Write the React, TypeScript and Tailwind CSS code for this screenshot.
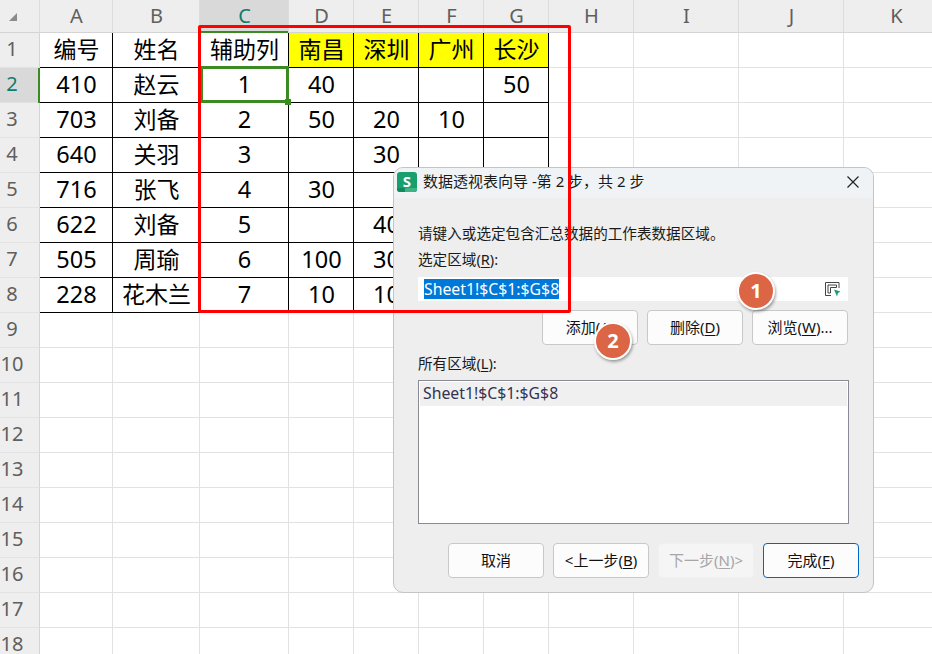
import React from "react";

const cols = ["A", "B", "C", "D", "E", "F", "G", "H", "I", "J", "K"];
const data: string[][] = [
  ["编号", "姓名", "辅助列", "南昌", "深圳", "广州", "长沙"],
  ["410", "赵云", "1", "40", "", "", "50"],
  ["703", "刘备", "2", "50", "20", "10", ""],
  ["640", "关羽", "3", "", "30", "", ""],
  ["716", "张飞", "4", "30", "", "", ""],
  ["622", "刘备", "5", "", "40", "", ""],
  ["505", "周瑜", "6", "100", "30", "", ""],
  ["228", "花木兰", "7", "10", "10", "", ""],
];
const rows = Array.from({ length: 18 }, (_, i) => i + 1);
const fontCls = "font-['Noto_Sans','Noto_Sans_CJK_SC',sans-serif]";

function Btn({ label, mnemonic, suffix = "", prefix = "", kind = "normal" }: { label: string; mnemonic?: string; suffix?: string; prefix?: string; kind?: "normal" | "disabled" | "primary" }) {
  const cls =
    kind === "disabled"
      ? "border-[#f0f0f0] bg-[#f5f5f5] text-[#a6a6a6]"
      : kind === "primary"
      ? "border-[#0067c0] bg-[#fcfcfc] text-[#111]"
      : "border-[#c8c8c8] bg-[#fcfcfc] text-[#111]";
  return (
    <div className={`flex h-[35px] w-[96px] shrink-0 items-center justify-center rounded-[4px] border pb-[1px] text-[15px] ${cls}`}>
      <span>
        {prefix}
        {label}
        {mnemonic && (
          <>
            (<span className="underline underline-offset-2">{mnemonic}</span>)
          </>
        )}
        {suffix}
      </span>
    </div>
  );
}

function Badge({ n, cls }: { n: string; cls: string }) {
  return (
    <div className={`absolute flex h-[38px] w-[38px] items-center justify-center rounded-full border-[2px] border-white bg-[#dc6546] text-[20px] font-bold text-white shadow-[1px_2px_3px_rgba(0,0,0,0.35)] ${cls}`}>
      {n}
    </div>
  );
}

export default function App() {
  return (
    <div className={`relative h-[654px] w-[932px] overflow-hidden bg-white ${fontCls}`}>
      <div className="grid grid-cols-[40px_73px_87px_89px_65px_65px_65px_65px_85px_105px_105px_105px] grid-rows-[33px_repeat(18,35px)]">
        {/* corner */}
        <div className="flex items-end justify-start border-r border-b border-r-[#dcdcdc] border-b-[#d4d4d4] bg-[#eeeeee] pb-[10px] pl-[8px]">
          <svg width="10" height="10" viewBox="0 0 10 10" className="shrink-0">
            <path d="M9 1V9H1Z" fill="#8a8a8a" />
          </svg>
        </div>
        {cols.map((c) => (
          <div
            key={c}
            className={`flex items-center justify-center border-r border-b border-r-[#dcdcdc] border-b-[#d4d4d4] pb-[1px] pl-[1px] text-[20px] ${c === "C" ? "bg-[#d9d9d9] text-[#0f7b6c]" : "bg-[#eeeeee] text-[#5f5f5f]"}`}
          >
            {c}
          </div>
        ))}
        {rows.map((r) => (
          <React.Fragment key={r}>
            <div
              className={`relative flex items-center justify-center border-r border-b border-r-[#d4d4d4] border-b-[#e2e2e2] pr-[15px] pb-[2px] text-[20px] ${r === 2 ? "bg-[#d9d9d9] text-[#0f7b6c]" : "bg-[#eeeeee] text-[#5f5f5f]"}`}
            >
              {r}
              {r === 2 && <div className="absolute top-0 -right-px -bottom-px w-[2px] bg-[#3c8a22]" />}
            </div>
            {cols.map((_, ci) => {
              const v = data[r - 1]?.[ci];
              const inTable = r <= 8 && ci <= 6;
              const yellow = r === 1 && ci >= 3 && ci <= 6;
              const cjk = !!v && /[^0-9]/.test(v);
              return (
                <div
                  key={ci}
                  className={`relative flex items-center justify-center border-r border-b pb-[1px] pl-[1px] leading-none whitespace-nowrap text-black ${cjk ? "text-[23px]" : "text-[23.5px]"} ${inTable ? "border-black" : "border-[#e2e2e2]"} ${yellow ? "bg-[#ffff00]" : ""}`}
                >
                  {v}
                  {r === 1 && ci === 2 && <div className="absolute -top-[2px] right-0 left-0 h-[2px] bg-[#3c8a22]" />}
                  {r === 2 && ci === 2 && (
                    <>
                      <div className="absolute -top-[2px] -right-px -bottom-px left-0 z-10 border-[3px] border-[#3c8a22]" />
                      <div className="absolute -right-[3px] -bottom-[3px] z-10 h-[6px] w-[6px] bg-[#3c8a22]" />
                    </>
                  )}
                </div>
              );
            })}
          </React.Fragment>
        ))}
      </div>

      {/* dialog window */}
      <div className="absolute top-[167px] left-[393px] z-20 flex h-[426px] w-[481px] flex-col overflow-hidden rounded-[10px] border border-[#c4c4c4] bg-[#eeeeee] text-[14.6px] text-[#1a1a1a]">
        <div className="flex h-[30px] shrink-0 items-center bg-[#eff3f6] pr-[14px] pb-[2px] pl-[3px]">
          <svg width="20" height="20" viewBox="0 0 20 20" className="shrink-0">
            <rect width="20" height="20" rx="3" fill="#17a06d" />
            <path d="M0 16H20V17a3 3 0 0 1-3 3H3a3 3 0 0 1-3-3Z" fill="#118a5c" />
            <path d="M8 16H20V17a3 3 0 0 1-3 3H8Z" fill="#3cb487" />
            <text x="10" y="14.5" textAnchor="middle" fontSize="15" fontWeight="700" fill="#fff" fontFamily="Noto Sans">S</text>
          </svg>
          <span className="ml-[6px] -translate-y-[1px] text-[15px] whitespace-nowrap">数据透视表向导 -第 2 步，共 2 步</span>
          <svg width="12" height="12" viewBox="0 0 12 12" className="ml-auto shrink-0">
            <path d="M0.5 0.5L11.5 11.5M11.5 0.5L0.5 11.5" stroke="#222" strokeWidth="1.2" />
          </svg>
        </div>

        <div className="flex flex-1 flex-col pr-[25px] pl-[24px]">
          <div className="mt-[24px] leading-[22px] whitespace-nowrap">请键入或选定包含汇总数据的工作表数据区域。</div>
          <div className="mt-[4px] leading-[22px]">
            选定区域(<span className="underline underline-offset-2">R</span>):
          </div>
          <div className="mt-[7px] flex h-[24px] items-center justify-between bg-white pr-[7px] pl-[6px]">
            <span className="bg-[#0078d7] text-[15.8px] leading-[20px] text-white">Sheet1!$C$1:$G$8</span>
            <svg width="17" height="16" viewBox="0 0 17 16" className="shrink-0">
              <path d="M1.5 1.5H15V7M7 14.5H1.5V1.5M4 4H12.5V6.5H6.5V12H4Z" fill="none" stroke="#444" strokeWidth="1" />
              <path d="M10 8.5L16.5 10.5L14 12L13 15.5Z" fill="#1e9c6b" />
            </svg>
          </div>
          <div className="mt-[9px] flex justify-end gap-[9px]">
            <Btn label="添加" mnemonic="A" />
            <Btn label="删除" mnemonic="D" />
            <Btn label="浏览" mnemonic="W" suffix="..." />
          </div>
          <div className="mt-[7px] leading-[22px]">
            所有区域(<span className="underline underline-offset-2">L</span>):
          </div>
          <div className="mt-[6px] h-[144px] w-[431px] border border-[#8a8a96] bg-white px-[1px] pt-[1px]">
            <div className="flex h-[24px] items-center bg-[#f0f0f0] pl-[3px] text-[15.8px] text-[#333350]">Sheet1!$C$1:$G$8</div>
          </div>
          <div className="mt-[19px] ml-[30px] flex gap-[9px]">
            <Btn label="取消" />
            <Btn label="上一步" prefix="<" mnemonic="B" />
            <Btn label="下一步" mnemonic="N" suffix=">" kind="disabled" />
            <Btn label="完成" mnemonic="F" kind="primary" />
          </div>
        </div>
      </div>

      {/* red annotation */}
      <div className="pointer-events-none absolute top-[25px] left-[198px] z-30 h-[288px] w-[373px] rounded-[2px] border-[3px] border-[#ff0000]" />
      <Badge n="1" cls="top-[272px] left-[737px] z-30" />
      <Badge n="2" cls="top-[322px] left-[594px] z-30" />
    </div>
  );
}
